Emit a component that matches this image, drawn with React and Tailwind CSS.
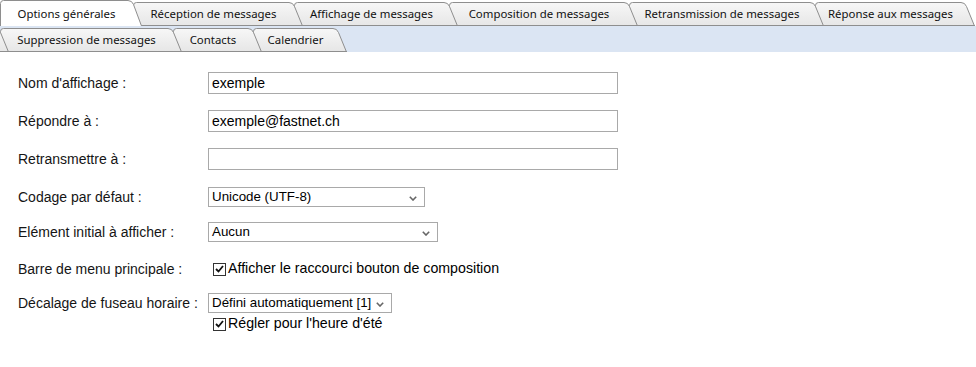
import React from 'react'

const row1 = [
  { label: 'Options générales', w: 'w-[133px]', px: 133, z: 'z-[9]', active: true },
  { label: 'Réception de messages', w: 'w-[161px]', px: 161, z: 'z-[8]' },
  { label: 'Affichage de messages', w: 'w-[155px]', px: 155, z: 'z-[7]' },
  { label: 'Composition de messages', w: 'w-[180px]', px: 180, z: 'z-[6]' },
  { label: 'Retransmission de messages', w: 'w-[186px]', px: 186, z: 'z-[5]' },
  { label: 'Réponse aux messages', w: 'w-[151px]', px: 151, z: 'z-[4]' },
]

const row2 = [
  { label: '', w: 'w-[100px] -ml-[100px]', px: 100, z: 'z-[9]' },
  { label: 'Suppression de messages', w: 'w-[173px]', px: 173, z: 'z-[8]' },
  { label: 'Contacts', w: 'w-[80px]', px: 80, z: 'z-[7]' },
  { label: 'Calendrier', w: 'w-[85px]', px: 85, z: 'z-[6]' },
]

const Tab = ({ label, w, px, z, active }) => {
  const H = 26
  const t = active ? 0.5 : 2.5
  const outline = `M0.5,${H} L0.5,${t + 3} Q0.5,${t} 3.5,${t} L${px - 5},${t} Q${px - 1},${t} ${px + 0.5},${t + 4} L${px + 8.5},${H}`
  const id = `g${px}${active ? 'a' : ''}`
  return (
    <div className={`relative shrink-0 h-[26px] flex items-center justify-center ${w} ${z}`}>
      <svg className="absolute left-0 top-0 overflow-visible" width={px + 10} height={H}>
        <defs>
          <linearGradient id={id} x1="0" y1="0" x2="0" y2="1">
            <stop offset="0" stopColor={active ? '#ffffff' : '#f7f7f7'} />
            <stop offset="1" stopColor={active ? '#ffffff' : '#e6e6e6'} />
          </linearGradient>
        </defs>
        <path d={outline + ' Z'} fill={`url(#${id})`} stroke="none" />
        <path d={outline} fill="none" stroke="#8e8e8e" strokeWidth="1" />
        {!active && <line x1="0" y1={H - 0.5} x2={px + 9} y2={H - 0.5} stroke="#8e8e8e" />}
      </svg>
      <span className="relative pt-[1px] text-[11.4px] text-[#111] whitespace-nowrap">{label}</span>
    </div>
  )
}

const Check = () => (
  <span className="w-[13px] h-[13px] border border-[#333] bg-white flex items-center justify-center shrink-0">
    <svg width="9" height="8" viewBox="0 0 9 8">
      <path d="M1 4 L3.5 6.5 L8 1" fill="none" stroke="#111" strokeWidth="1.8" />
    </svg>
  </span>
)

const Select = ({ value, w }) => (
  <div className={`relative h-[20px] ${w} border border-[#a9a9a9] bg-white flex items-center pl-[3px]`}>
    <span className="text-[13.33px] text-black whitespace-nowrap">{value}</span>
    <svg className="absolute right-[7px] top-[8px]" width="8" height="5" viewBox="0 0 8 5">
      <path d="M0.8 0.8 L4 4 L7.2 0.8" fill="none" stroke="#666" strokeWidth="1.6" />
    </svg>
  </div>
)

const Input = ({ value }) => (
  <div className="h-[22px] w-[410px] border border-[#a9a9a9] bg-white flex items-center pl-[3px]">
    <span className="text-[14px] text-black">{value}</span>
  </div>
)

const Label = ({ children }) => (
  <div className="w-[190px] shrink-0 text-[14px] text-[#151515]">{children}</div>
)

export default function App() {
  return (
    <div className="w-[976px] h-[367px] bg-white overflow-hidden font-['Liberation_Sans',Arial,sans-serif]">
      <div className="font-['Noto_Sans','Open_Sans',sans-serif]">
        <div className="flex h-[26px] bg-white">
          {row1.map((t) => (
            <Tab key={t.label} {...t} />
          ))}
        </div>
        <div className="flex h-[26px] bg-[#dbe5f3]">
          {row2.map((t) => (
            <Tab key={t.px} {...t} />
          ))}
        </div>
      </div>

      <div className="px-[18px] flex flex-col">
        <div className="flex items-center h-[22px] mt-[20px]">
          <Label>Nom d'affichage :</Label>
          <Input value="exemple" />
        </div>
        <div className="flex items-center h-[22px] mt-[16px]">
          <Label>Répondre à :</Label>
          <Input value="exemple@fastnet.ch" />
        </div>
        <div className="flex items-center h-[22px] mt-[16px]">
          <Label>Retransmettre à :</Label>
          <Input value="" />
        </div>
        <div className="flex items-center h-[20px] mt-[17px]">
          <Label>Codage par défaut :</Label>
          <Select value="Unicode (UTF-8)" w="w-[217px]" />
        </div>
        <div className="flex items-center h-[20px] mt-[15px]">
          <Label>Elément initial à afficher :</Label>
          <Select value="Aucun" w="w-[230px]" />
        </div>
        <div className="flex items-center h-[20px] mt-[17px]">
          <Label>Barre de menu principale :</Label>
          <div className="flex items-center gap-[2px] pl-[5px]">
            <Check />
            <span className="text-[14.2px] text-black">Afficher le raccourci bouton de composition</span>
          </div>
        </div>
        <div className="flex items-center h-[20px] mt-[14px]">
          <Label>Décalage de fuseau horaire :</Label>
          <Select value="Défini automatiquement [1]" w="w-[184px]" />
        </div>
        <div className="flex items-center h-[16px] mt-[3px] pl-[195px]">
          <Check />
          <span className="ml-[2px] text-[14.2px] text-black">Régler pour l'heure d'été</span>
        </div>
      </div>
    </div>
  )
}
